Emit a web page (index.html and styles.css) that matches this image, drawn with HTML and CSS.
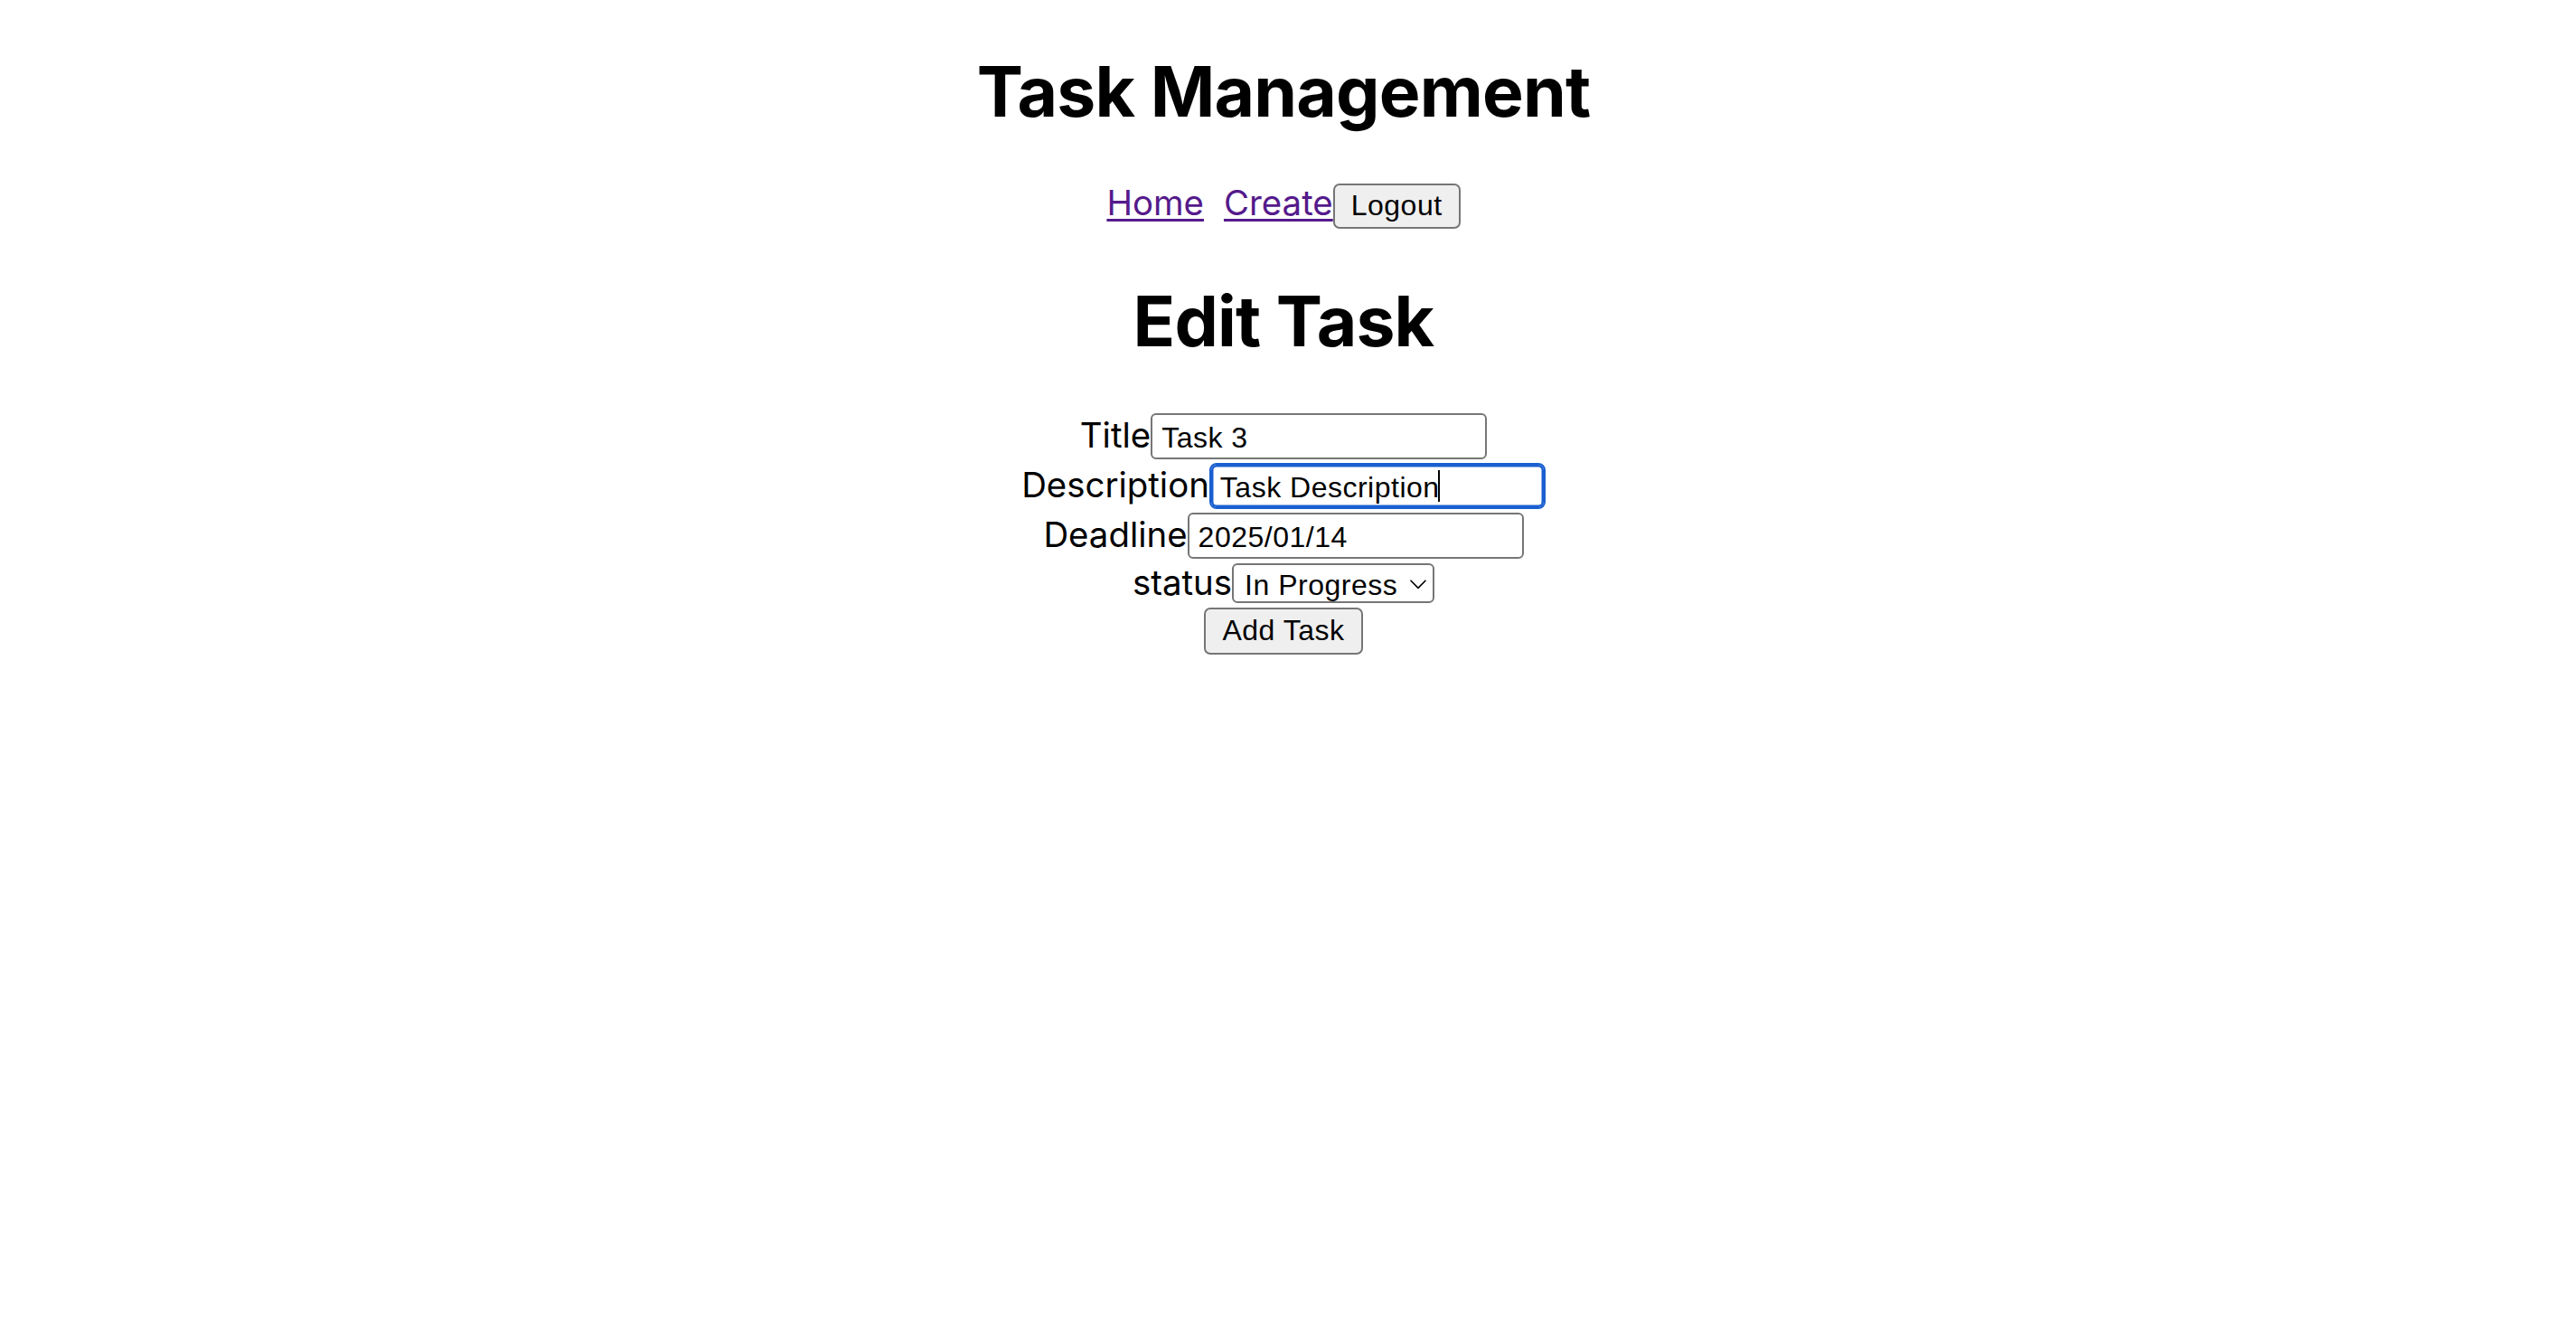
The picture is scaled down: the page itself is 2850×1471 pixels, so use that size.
FILE: index.html
```html
<!DOCTYPE html>
<html lang="en">
<head>
<meta charset="utf-8">
<title>Task Management</title>
<link rel="stylesheet" href="styles.css">
</head>
<body>
<div class="page">
  <header class="header">
    <h1 class="app-title">Task Management</h1>
    <nav class="nav">
      <a href="#" class="nav-link nav-link--home">Home</a>
      <a href="#" class="nav-link">Create</a>
      <button type="button" class="btn btn--logout">Logout</button>
    </nav>
  </header>
  <main class="main">
    <h1 class="page-title">Edit Task</h1>
    <form class="task-form">
      <div class="row">
        <label class="label" for="title">Title</label>
        <input class="input" id="title" type="text" value="Task 3">
      </div>
      <div class="row">
        <label class="label" for="description">Description</label>
        <span class="field-wrap">
          <input class="input input--focused" id="description" type="text" value="Task Description">
          <span class="caret"></span>
        </span>
      </div>
      <div class="row row--short">
        <label class="label" for="deadline">Deadline</label>
        <input class="input" id="deadline" type="text" value="2025/01/14">
      </div>
      <div class="row row--status">
        <label class="label" for="status">status</label>
        <span class="field-wrap">
          <select class="select" id="status">
            <option>To Do</option>
            <option selected>In Progress</option>
            <option>Done</option>
          </select>
          <svg class="chevron" width="18" height="11" viewBox="0 0 18 11" aria-hidden="true">
            <path d="M1 1.2 L9 9.4 L17 1.2" fill="none" stroke="#000" stroke-width="1.6" stroke-linecap="round" stroke-linejoin="round"/>
          </svg>
        </span>
      </div>
      <div class="row row--submit">
        <button type="submit" class="btn btn--submit">Add Task</button>
      </div>
    </form>
  </main>
</div>
</body>
</html>
```

FILE: styles.css
```css
html,
body {
  margin: 0;
  background: #ffffff;
}

body {
  font-family: Inter, "Noto Sans", sans-serif;
  color: #000000;
}

.page {
  padding-top: 55px;
  padding-right: 10px;
}

.app-title,
.page-title {
  margin: 0;
  font-size: 76.8px;
  font-weight: 700;
  line-height: 93px;
  letter-spacing: -0.8px;
  text-align: center;
}

.nav {
  display: flex;
  justify-content: center;
  align-items: baseline;
  margin-top: 53px;
}

.nav-link {
  font-size: 38.4px;
  line-height: 46.5px;
  color: #551a8b;
  text-decoration: underline;
  text-decoration-thickness: 3px;
  text-underline-offset: 4px;
}

.nav-link--home {
  margin-right: 22px;
}

.btn {
  box-sizing: border-box;
  font-family: "Liberation Sans", Arial, sans-serif;
  font-size: 32px;
  line-height: normal;
  letter-spacing: 0.5px;
  color: #000000;
  background: #efefef;
  border: 2px solid #767676;
  border-radius: 7px;
  padding: 0 18px;
  margin: 0;
}

.btn--logout {
  height: 50px;
  padding: 0 18px;
}

.btn--submit {
  height: 52px;
}

.page-title {
  margin-top: 56px;
}

.task-form {
  margin-top: 55px;
  display: flex;
  flex-direction: column;
}

.row {
  display: flex;
  justify-content: center;
  align-items: baseline;
  height: 55px;
}

.row--short {
  height: 54px;
}

.row--status {
  height: 51px;
}

.row--submit {
  height: 52px;
}

.label {
  font-size: 38.4px;
  line-height: 46.5px;
}

.field-wrap {
  position: relative;
  display: inline-flex;
  align-items: baseline;
}

.input {
  box-sizing: border-box;
  width: 372px;
  height: 51px;
  margin: 0;
  padding: 4px 10px 0;
  border: 2px solid #767676;
  border-radius: 6px;
  background: #ffffff;
  color: #000000;
  font-family: "Liberation Sans", Arial, sans-serif;
  font-size: 32px;
  line-height: normal;
  letter-spacing: 0.5px;
  outline: none;
}

.input--focused {
  border-color: #1a5fd0;
  box-shadow: inset 0 0 0 2.5px #1a5fd0;
  border-radius: 8px;
}

.caret {
  position: absolute;
  left: 253px;
  top: 8px;
  width: 2px;
  height: 35px;
  background: #000000;
}

.select {
  box-sizing: border-box;
  appearance: none;
  -webkit-appearance: none;
  width: 224px;
  height: 44px;
  margin: 0;
  padding: 3px 0 0 12px;
  border: 2px solid #767676;
  border-radius: 6px;
  background: #ffffff;
  color: #000000;
  font-family: "Liberation Sans", Arial, sans-serif;
  font-size: 32px;
  line-height: normal;
  letter-spacing: 0.5px;
}

.chevron {
  position: absolute;
  right: 9px;
  top: 18px;
  pointer-events: none;
}
```
